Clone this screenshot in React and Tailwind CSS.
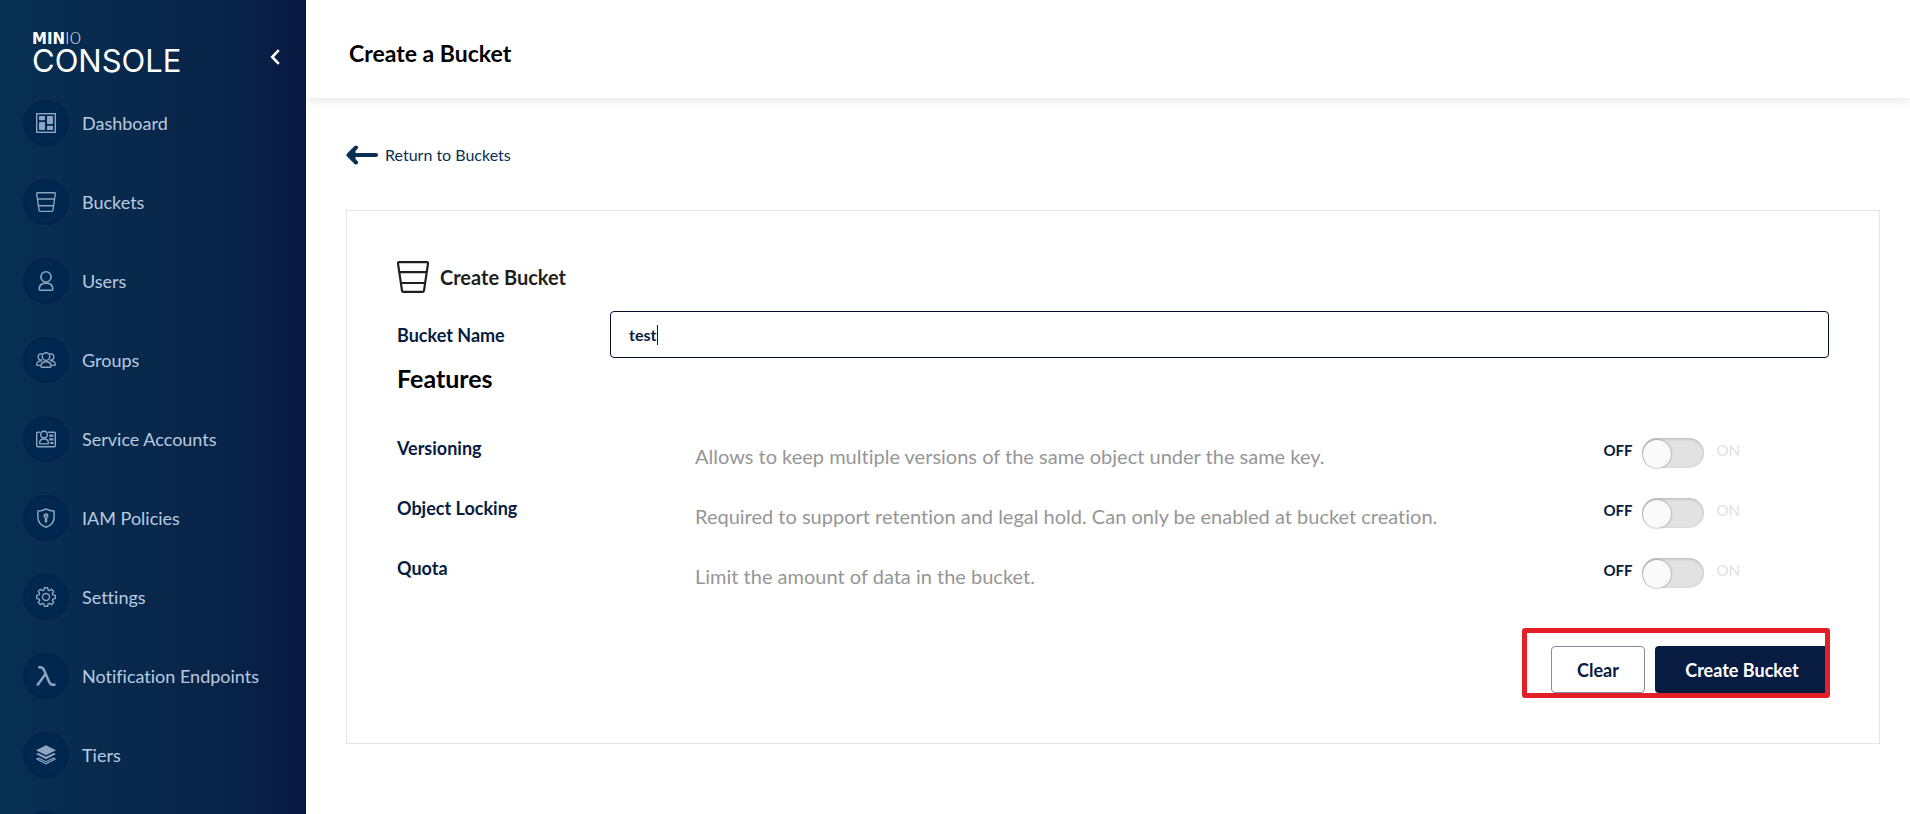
import { useState } from "react";

function DashboardIcon() {
  return (
    <svg viewBox="0 0 20 20" className="size-5" fill="currentColor">
      <rect x="0.7" y="0.7" width="18.6" height="18.6" fill="none" stroke="currentColor" strokeWidth="1.4" />
      <rect x="3" y="3" width="6" height="4.2" rx="0.8" />
      <rect x="3" y="9" width="6" height="8" rx="0.8" />
      <rect x="11" y="3" width="6" height="8" rx="0.8" />
      <rect x="11" y="12.8" width="6" height="4.2" rx="0.8" />
    </svg>
  );
}

function BucketIcon({ className = "size-5" }) {
  return (
    <svg viewBox="0 0 32 32" className={className} fill="none" stroke="currentColor" strokeWidth="2.2" strokeLinejoin="round">
      <path d="M2.2 1.100h27.600q1.400 0 1.200 1.500L27 29.600q-.2 1.300-1.400 1.300H6.400Q5.200 30.900 5 29.600L1 2.600Q.8 1.100 2.200 1.100Z" />
      <path d="M2.300 11.200h27.400M4 22h24" />
    </svg>
  );
}

function UserIcon() {
  return (
    <svg viewBox="0 0 20 20" className="size-5" fill="none" stroke="currentColor" strokeWidth="1.600">
      <circle cx="10" cy="5.900" r="5.100" />
      <path d="M3.200 18.100c0-4 3-6 6.800-6s6.800 2 6.800 6q0 1.100-1.100 1.100H4.300q-1.100 0-1.100-1.100Z" />
    </svg>
  );
}

function GroupsIcon() {
  return (
    <svg viewBox="0 0 20 20" className="size-5" fill="none" stroke="currentColor" strokeWidth="1.400">
      <circle cx="10" cy="6.600" r="3.800" />
      <path d="M4.900 16.300c0-3 2.300-4.600 5.100-4.600s5.100 1.600 5.100 4.600q0 1-1 1H5.900q-1 0-1-1Z" />
      <path d="M6.600 4.200a3.100 3.100 0 1 0-.5 5.700M4.800 15.400H1.500q-.8 0-.8-.8c0-2.500 2-4 5-3.800" />
      <path d="M13.400 4.200a3.100 3.100 0 1 1 .5 5.700M15.200 15.400h3.300q.8 0 .8-.8c0-2.500-2-4-5-3.800" />
    </svg>
  );
}

function AccountsIcon() {
  return (
    <svg viewBox="0 0 20 20" className="size-5" fill="none" stroke="currentColor" strokeWidth="1.400">
      <path d="M3.800 3.200H1.700q-1 0-1 1v12.600q0 1 1 1h16.600q1 0 1-1V4.200q0-1-1-1h-6.200" />
      <circle cx="8" cy="5.500" r="3.300" />
      <path d="M3.600 14.100c0-2.600 1.900-4.100 4.400-4.100s4.400 1.500 4.400 4.100q0 .8-.8.8H4.400q-.8 0-.8-.8Z" />
      <path d="M13.200 6.600h4.200M13.200 10.400h4.200M14.200 14h3.200" strokeWidth="2.200" />
    </svg>
  );
}

function PoliciesIcon() {
  return (
    <svg viewBox="0 0 20 20" className="size-5" fill="none" stroke="currentColor" strokeWidth="1.500" strokeLinejoin="round">
      <path d="M10 .8C7.800 2.300 4.900 3 1.900 3v6.500c0 4.700 3.300 8 8.100 9.800 4.800-1.800 8.100-5.100 8.100-9.800V3c-3 0-5.900-.7-8.100-2.200Z" />
      <circle cx="10" cy="7.800" r="2.500" fill="currentColor" stroke="none" />
      <path d="M10 8v6.500" strokeWidth="2.400" />
      <path d="M10 7v3" stroke="#00264d" strokeWidth="0.700" />
    </svg>
  );
}

function SettingsIcon() {
  return (
    <svg viewBox="0 0 20 20" className="size-5" fill="none" stroke="currentColor" strokeWidth="1.400" strokeLinejoin="round">
      <circle cx="10" cy="10" r="3.500" />
      <path d="M8.400.7h3.200l.5 2.500 1.300.5 2.100-1.400 2.200 2.200-1.400 2.100.5 1.300 2.500.5v3.200l-2.500.5-.5 1.300 1.400 2.100-2.200 2.200-2.100-1.400-1.300.5-.5 2.500H8.400l-.5-2.500-1.300-.5-2.100 1.400-2.200-2.200 1.400-2.100-.5-1.300-2.500-.5V8.400l2.500-.5.5-1.300-1.400-2.100 2.200-2.200 2.100 1.400 1.300-.5Z" />
    </svg>
  );
}

function LambdaIcon() {
  return (
    <svg viewBox="0 0 20 20" className="size-5" fill="none" stroke="currentColor" strokeWidth="2.500">
      <path d="M2.200 1.300h2.200c2 0 2.800 1 3.600 2.800l5.300 12.200c.8 1.900 1.800 2.500 3.400 2.500h2.800" />
      <path d="M9.300 8.200 1.200 19.400" />
    </svg>
  );
}

function TiersIcon() {
  return (
    <svg viewBox="0 0 20 20" className="size-5" fill="currentColor">
      <path d="m10 .2 10 5-10 5-10-5Z" />
      <path d="m0 9 2.300-1.100L10 11.700l7.700-3.800L20 9l-10 5.200Z" />
      <path d="m.8 14 1.900-.9 7.300 3.600 7.300-3.600 1.900.9L10 18.900Z" fill="none" stroke="currentColor" strokeWidth="1.200" />
    </svg>
  );
}

const menu = [
  ["Dashboard", DashboardIcon],
  ["Buckets", BucketIcon],
  ["Users", UserIcon],
  ["Groups", GroupsIcon],
  ["Service Accounts", AccountsIcon],
  ["IAM Policies", PoliciesIcon],
  ["Settings", SettingsIcon],
  ["Notification Endpoints", LambdaIcon],
  ["Tiers", TiersIcon],
  ["", null],
];

function Sidebar() {
  return (
    <aside className="w-[306px] shrink-0 overflow-hidden bg-linear-to-r from-[#073052] via-[#082247] via-80% to-[#081840]">
      <div className="flex h-[83px] items-end justify-between pr-[22px] pb-1.5 pl-8">
        <div className="text-white">
          <div className="font-['DejaVu_Sans',sans-serif] text-[15px] leading-3">
            <span className="font-bold">MIN</span>
            <span className="font-extralight">IO</span>
          </div>
          <div className="font-[Inter,sans-serif] text-[31px] leading-8">CONSOLE</div>
        </div>
        <button type="button" aria-label="Collapse menu" className="mb-2 p-1 text-white">
          <svg viewBox="0 0 10 16" className="h-4 w-[10px]" fill="none" stroke="currentColor" strokeWidth="2.600">
            <path d="M8.800 1.200 2.200 8l6.600 6.800" />
          </svg>
        </button>
      </div>
      <nav>
        <ul>
          {menu.map(([label, Icon]) => (
            <li key={label}>
              <a href="#" className="flex h-[79px] items-center gap-[13px] pl-[23px] text-lg text-[#b9cbe0]">
                <span className="flex size-[46px] items-center justify-center rounded-full border-2 border-[#04234a] bg-[#00274f] text-[#8da5be]">
                  {Icon && <Icon />}
                </span>
                {label}
              </a>
            </li>
          ))}
        </ul>
      </nav>
    </aside>
  );
}

function FeatureRow({ id, label, description }) {
  const [on, setOn] = useState(false);
  return (
    <div className="flex h-[60px] items-start pr-[89px]">
      <label htmlFor={id} className="w-[298px] shrink-0 text-lg leading-5 font-bold text-[#081c42]">
        {label}
      </label>
      <p className="grow pt-1 text-xl leading-7 text-[#969696]">{description}</p>
      <div className="flex items-start text-[15px] leading-6 text-[#081c42]">
        <span className={on ? "text-[#e1e1e1]" : "font-bold"}>OFF</span>
        <span className="relative mr-[13px] ml-[9px] block h-[30px] w-[62px]">
          <input
            id={id}
            type="checkbox"
            role="switch"
            checked={on}
            onChange={() => setOn(!on)}
            className="peer h-[30px] w-[62px] cursor-pointer appearance-none rounded-full bg-[#e2e2e2] shadow-[inset_0_1px_3px_rgba(0,0,0,0.2)] checked:bg-[#081c42]"
          />
          <span className="pointer-events-none absolute top-0.5 left-px size-7 rounded-full bg-[#fafafa] shadow-[0_0_2px_rgba(0,0,0,0.500)] peer-checked:left-8" />
        </span>
        <span className={on ? "font-bold" : "text-[#e1e1e1]"}>ON</span>
      </div>
    </div>
  );
}

export default function App() {
  const [name, setName] = useState("test");
  const [edited, setEdited] = useState(false);
  const rename = (value) => {
    setName(value);
    setEdited(true);
  };
  return (
    <div className="flex h-screen bg-white font-[Lato,sans-serif] [font-variant-ligatures:none]">
      <Sidebar />
      <div className="min-w-0 grow overflow-hidden">
        <header className="flex h-[98px] items-center px-[43px] pt-2 shadow-[0_3px_10px_rgba(0,0,0,0.090)]">
          <h1 className="text-[23px] leading-8 font-bold text-black">Create a Bucket</h1>
        </header>
        <main className="pt-[45px] pr-[30px] pl-10">
          <a href="#" className="inline-flex items-center gap-[7px] text-base leading-6 text-[#073052]">
            <svg viewBox="0 0 32 20" className="h-5 w-8" fill="none" stroke="currentColor" strokeWidth="4" strokeLinecap="round" strokeLinejoin="round">
              <path d="M10 2.500 2.500 10l7.500 7.500M3 10h27" />
              <path d="m4 10 5-4v8Z" fill="currentColor" strokeWidth="1" />
            </svg>
            Return to Buckets
          </a>
          <form className="mt-[39px] border border-[#e5e5e5] p-[50px]" onSubmit={(e) => e.preventDefault()}>
            <h2 className="flex items-center gap-[11px] text-xl leading-8 font-bold text-[#1f1f1f]">
              <BucketIcon className="size-8" />
              Create Bucket
            </h2>
            <div className="mt-[18px] flex items-center">
              <label htmlFor="bucket-name" className="w-[213px] shrink-0 text-lg leading-6 font-bold text-[#081c42]">
                Bucket Name
              </label>
              <div className="relative flex min-w-0 grow">
                <input
                  id="bucket-name"
                  type="text"
                  value={name}
                  onFocus={() => setEdited(true)}
                  onChange={(e) => rename(e.target.value)}
                  className="h-[47px] min-w-0 grow rounded-[4px] border border-[#04102c] px-[18px] text-base font-bold text-[#081c42] outline-none"
                />
                {!edited && <span className="pointer-events-none absolute top-3.5 left-[47px] h-5 w-px bg-[#081c42]" />}
              </div>
            </div>
            <h3 className="mt-1 text-[25px] leading-8 font-bold text-black">Features</h3>
            <div className="mt-11">
              <FeatureRow id="versioning" label="Versioning" description="Allows to keep multiple versions of the same object under the same key." />
              <FeatureRow id="locking" label="Object Locking" description="Required to support retention and legal hold. Can only be enabled at bucket creation." />
              <FeatureRow id="quota" label="Quota" description="Limit the amount of data in the bucket." />
            </div>
            <div className="relative mt-7 flex justify-end gap-[10px]">
              <button
                type="button"
                onClick={() => rename("")}
                className="h-[47px] w-[94px] rounded-[4px] border border-[#838d9f] text-lg font-bold text-[#081c42]"
              >
                Clear
              </button>
              <button type="submit" className="h-[47px] w-[174px] rounded-[4px] bg-[#081c42] text-lg font-bold text-white">
                Create Bucket
              </button>
              <span className="pointer-events-none absolute -top-[18px] -right-px h-[70px] w-[308px] rounded-[3px] border-5 border-[#e32028]" />
            </div>
          </form>
        </main>
      </div>
    </div>
  );
}
